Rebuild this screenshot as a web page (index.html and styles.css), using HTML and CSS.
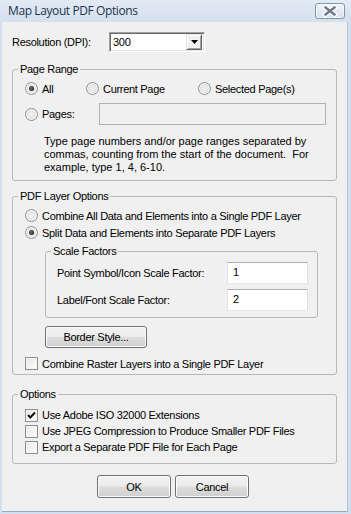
FILE: index.html
```html
<!DOCTYPE html>
<html>
<head>
<meta charset="utf-8">
<link rel="stylesheet" href="styles.css">
</head>
<body>
<div class="window">
  <div class="titlebar">
    <span class="title">Map Layout PDF Options</span>
    <div class="close">
      <svg width="28" height="14" viewBox="0 0 28 14">
        <path d="M9.5 3.5 L18.5 10.5 M18.5 3.5 L9.5 10.5" stroke="#ffffff" stroke-width="4.6" stroke-linecap="square" fill="none"/>
        <path d="M9.5 3.5 L18.5 10.5 M18.5 3.5 L9.5 10.5" stroke="#6c7a8c" stroke-width="2.4" stroke-linecap="square" fill="none"/>
      </svg>
    </div>
  </div>
  <div class="client">
    <div class="res-row">
      <span class="res-label">Resolution (DPI):</span>
      <div class="combo">
        <span class="combo-text">300</span>
        <span class="combo-btn"><svg width="7" height="4" viewBox="0 0 7 4"><polygon points="0,0 7,0 3.5,4" fill="#000"/></svg></span>
      </div>
    </div>

    <fieldset class="group g-range">
      <legend>Page Range</legend>
      <div class="radio-row">
        <div class="opt w-all"><span class="radio on"></span>All</div>
        <div class="opt w-cur"><span class="radio"></span>Current Page</div>
        <div class="opt"><span class="radio"></span>Selected Page(s)</div>
      </div>
      <div class="pages-row">
        <div class="opt w-pages"><span class="radio"></span>Pages:</div>
        <div class="textbox disabled pages-box"></div>
      </div>
      <p class="help">Type page numbers and/or page ranges separated by<br>commas, counting from the start of the document.&nbsp; For<br>example, type 1, 4, 6-10.</p>
    </fieldset>

    <fieldset class="group g-layer">
      <legend>PDF Layer Options</legend>
      <div class="opt row-first"><span class="radio"></span>Combine All Data and Elements into a Single PDF Layer</div>
      <div class="opt row-second"><span class="radio on"></span>Split Data and Elements into Separate PDF Layers</div>
      <fieldset class="group g-scale">
        <legend>Scale Factors</legend>
        <div class="field-row fr-first">
          <span class="field-label">Point Symbol/Icon Scale Factor:</span>
          <div class="textbox scale-box">1</div>
        </div>
        <div class="field-row fr-second">
          <span class="field-label">Label/Font Scale Factor:</span>
          <div class="textbox scale-box">2</div>
        </div>
      </fieldset>
      <div class="btn border-btn">Border Style...</div>
      <div class="opt chk-raster"><span class="check"></span>Combine Raster Layers into a Single PDF Layer</div>
    </fieldset>

    <fieldset class="group g-options">
      <legend>Options</legend>
      <div class="opt crow crow-first"><span class="check on"><svg width="11" height="11" viewBox="0 0 11 11"><polyline points="2,5 4.3,7.5 9,2.5" fill="none" stroke="#111" stroke-width="2"/></svg></span>Use Adobe ISO 32000 Extensions</div>
      <div class="opt crow"><span class="check"></span>Use JPEG Compression to Produce Smaller PDF Files</div>
      <div class="opt crow"><span class="check"></span>Export a Separate PDF File for Each Page</div>
    </fieldset>

    <div class="buttons">
      <div class="btn dlg-btn">OK</div>
      <div class="btn dlg-btn">Cancel</div>
    </div>
  </div>
</div>
</body>
</html>
```

FILE: styles.css
```css
html, body {
  margin: 0;
  padding: 0;
}
body {
  font-family: "Liberation Sans", Arial, sans-serif;
  font-size: 11px;
  letter-spacing: -0.3px;
  color: #000;
  background: #d6e1ef;
}
.window {
  width: 351px;
  height: 514px;
  box-sizing: border-box;
  display: flex;
  flex-direction: column;
  background: #d3dfee;
}
.titlebar {
  height: 22px;
  flex: none;
  display: flex;
  justify-content: space-between;
  align-items: flex-start;
  padding: 0 6px 0 8px;
  background: linear-gradient(#e2eaf5, #d5e0ee);
}
.title {
  font-family: "Open Sans", "Noto Sans", sans-serif;
  font-size: 12px;
  line-height: 22px;
  color: #22344d;
  letter-spacing: -0.4px;
}
.close {
  margin-top: 3px;
  width: 28px;
  height: 14px;
  border: 1px solid #8393a8;
  border-radius: 3px;
  background: linear-gradient(#f0f4f9, #d8e1ec);
  box-shadow: inset 0 0 0 1px rgba(255,255,255,0.6);
  display: flex;
}
.client {
  flex: 1;
  margin: 0 3px 2px 2px;
  background: #f0f0f0;
  padding: 10px 10px 0 10px;
  border-bottom: 1px solid #9aabc0;
  border-right: 1px solid #b3c2d4;
}
.res-row {
  display: flex;
  align-items: center;
  height: 20px;
}
.res-label {
  width: 97px;
}
.combo {
  width: 96px;
  height: 20px;
  box-sizing: border-box;
  border: 1px solid;
  border-color: #a0a0a0 #ffffff #ffffff #a0a0a0;
  box-shadow: inset 1px 1px 0 #696969, inset -1px -1px 0 #e3e3e3;
  background: #fff;
  display: flex;
  align-items: center;
  justify-content: space-between;
  padding: 1px 2px 1px 3px;
}
.combo-text {
  line-height: 14px;
}
.combo-btn {
  width: 16px;
  height: 16px;
  box-sizing: border-box;
  background: #f0f0f0;
  border: 1px solid;
  border-color: #e3e3e3 #696969 #696969 #e3e3e3;
  box-shadow: inset 1px 1px 0 #fff, inset -1px -1px 0 #a0a0a0;
  display: flex;
  align-items: center;
  justify-content: center;
}
.group {
  margin: 0;
  padding: 0;
  border: 1px solid #b7b7b7;
  border-radius: 3px;
  min-width: 0;
}
.group legend {
  margin-left: 5px;
  padding: 0 2px;
  line-height: 13px;
  font-size: 11px;
}
.g-range {
  margin-top: 11px;
  padding-bottom: 6px;
}
.opt {
  display: flex;
  align-items: center;
  height: 15px;
  white-space: nowrap;
}
.radio-row {
  display: flex;
  margin: 5px 0 0 12px;
}
.w-all { width: 61px; }
.w-cur { width: 112px; }
.radio {
  width: 13px;
  height: 13px;
  box-sizing: border-box;
  border-radius: 50%;
  border: 1px solid #8c8f93;
  background: radial-gradient(circle at 50% 50%, #f4f4f4 0%, #e0e0e0 60%, #d2d2d2 100%);
  box-shadow: inset 0 0 0 1px #fbfbfb;
  margin-right: 4px;
  flex: none;
  display: flex;
  align-items: center;
  justify-content: center;
}
.radio.on::after {
  content: "";
  width: 5px;
  height: 5px;
  border-radius: 50%;
  background: radial-gradient(circle at 40% 40%, #6a6a6a, #141414);
}
.pages-row {
  display: flex;
  align-items: center;
  margin: 7px 0 0 12px;
}
.w-pages { width: 74px; }
.textbox {
  box-sizing: border-box;
  height: 22px;
  border: 1px solid #abadb3;
  border-color: #abadb3 #dbdfe6 #e3e9ef #e2e3ea;
  background: #fff;
  padding: 3px 5px;
  line-height: 13px;
}
.textbox.disabled {
  background: #f0f0f0;
  border-color: #adb2b5;
}
.pages-box {
  width: 227px;
}
.help {
  margin: 10px 0 0 31px;
  line-height: 13px;
  letter-spacing: 0;
}
.g-layer {
  margin-top: 9px;
  padding-bottom: 3px;
}
.row-first { margin: 5px 0 0 12px; }
.row-second { margin: 2px 0 0 12px; }
.g-scale {
  margin: 5px 18px 0 32px;
  padding-bottom: 6px;
}
.field-row {
  display: flex;
  align-items: center;
  margin-left: 11px;
}
.fr-first { margin-top: 4px; }
.fr-second { margin-top: 5px; }
.field-label { width: 170px; }
.scale-box { width: 81px; }
.btn {
  box-sizing: border-box;
  border: 1px solid #707070;
  border-radius: 3px;
  background: linear-gradient(#f2f2f2 0%, #ebebeb 48%, #dddddd 52%, #cfcfcf 100%);
  box-shadow: inset 0 0 0 1px #fcfcfc;
  display: flex;
  align-items: center;
  justify-content: center;
}
.border-btn {
  margin: 8px 0 0 32px;
  width: 102px;
  height: 22px;
}
.check {
  width: 13px;
  height: 13px;
  box-sizing: border-box;
  border: 1px solid #8c8f93;
  background: linear-gradient(135deg, #e6e6e6, #ffffff);
  box-shadow: inset 0 0 0 1px #f4f4f4;
  margin-right: 4px;
  flex: none;
  display: flex;
  align-items: center;
  justify-content: center;
}
.chk-raster { margin: 8px 0 0 12px; }
.g-options {
  margin-top: 13px;
  padding-bottom: 8px;
}
.crow {
  height: 16px;
  margin-left: 12px;
}
.crow-first { margin-top: 6px; }
.buttons {
  display: flex;
  gap: 4px;
  margin: 11px 0 0 85px;
}
.dlg-btn {
  width: 74px;
  height: 23px;
}
```
